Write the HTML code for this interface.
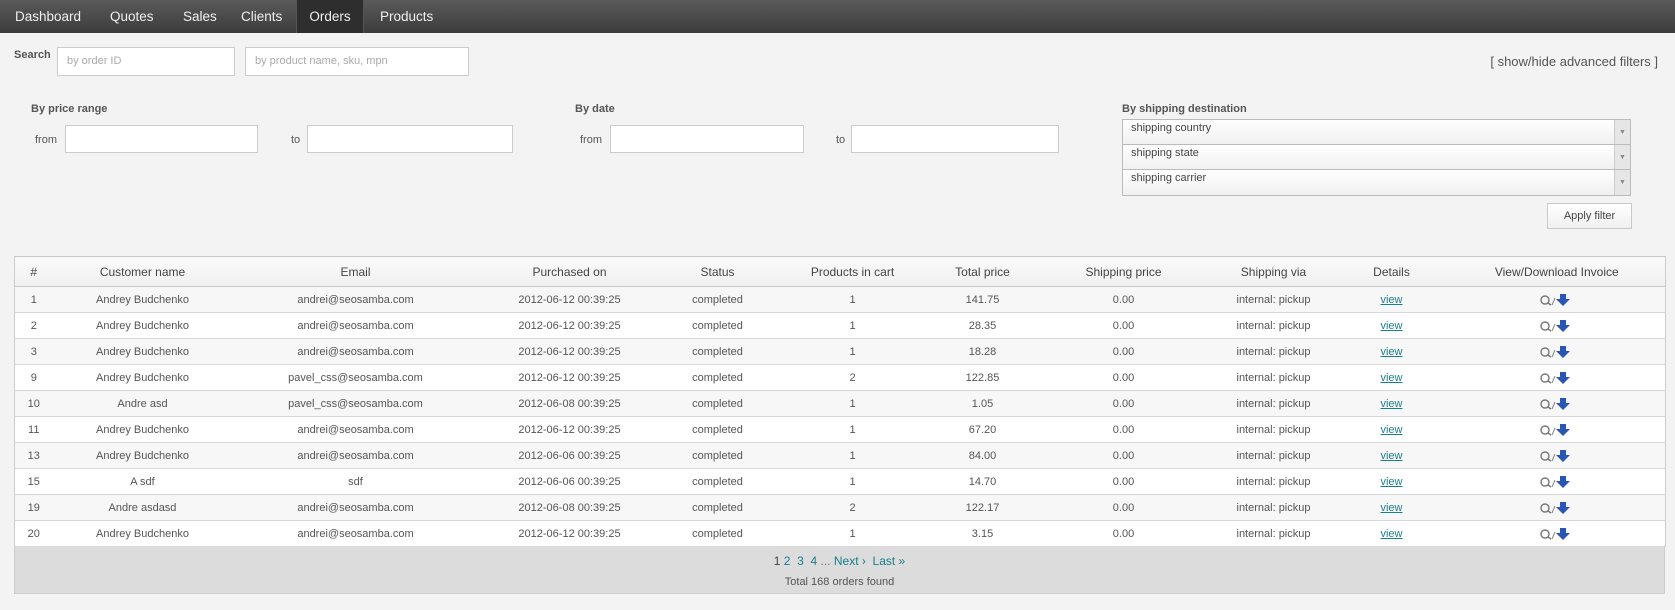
<!DOCTYPE html>
<html><head><meta charset="utf-8"><style>
*{box-sizing:border-box;margin:0;padding:0}
body{width:1675px;height:610px;background:#f3f3f3;font-family:"Liberation Sans",sans-serif;color:#444;position:relative;overflow:hidden}
.nav{position:absolute;left:0;top:0;width:1675px;height:33px;background:linear-gradient(#5a5a5a,#3c3c3c);}
.nav span{position:absolute;top:0;height:33px;line-height:33px;color:#f0f0f0;font-size:13.5px}
.nav .act{background:#2e2e2e;border-left:1px solid #555;border-right:1px solid #555;width:68px;text-align:center}
.a{position:absolute}
.in{position:absolute;background:#fff;border:1px solid #ccc;font-size:11px;color:#aaa;padding-left:9px;line-height:26px}
.lbl{position:absolute;font-size:11px;color:#555}
.b{position:absolute;font-size:11px;font-weight:bold;color:#555}
.sel{position:absolute;left:1122px;width:509px;height:27px;background:linear-gradient(#fff,#f0f0f0);border:1px solid #bbb;font-size:11px;color:#444;padding:2px 8px}
.sel i{position:absolute;right:0;top:0;width:16px;height:25px;border-left:1px solid #ccc;background:#e6e6e6;font-style:normal;font-size:7px;color:#888;text-align:center;line-height:25px}
table{position:absolute;left:14px;top:256px;width:1651px;border-collapse:collapse;border:1px solid #ccc;table-layout:fixed}
th{height:30px;font-weight:normal;font-size:12px;color:#444;background:linear-gradient(#fafafa,#f0f0f0);border-bottom:1px solid #ccc}
td{height:26px;font-size:11px;color:#555;text-align:center;border-bottom:1px solid #d6d6d6}
tr.o td{background:#f7f7f7}tr.e td{background:#fff}
td a{color:#1a7f8a;text-decoration:underline}
td svg{vertical-align:middle}
.foot{position:absolute;left:14px;top:546px;width:1651px;height:48px;background:#dcdcdc;border:1px solid #ccc;border-top:none;text-align:center;font-size:11px}
.foot .p{position:absolute;top:8px;left:0;width:100%;font-size:12px;color:#1a7f8a}
.foot .t{position:absolute;top:30px;left:0;width:100%;color:#555}
</style></head><body>
<div class="nav">
<span style="left:15px">Dashboard</span><span style="left:110px">Quotes</span><span style="left:183px">Sales</span><span style="left:241px">Clients</span><span class="act" style="left:296px">Orders</span><span style="left:380px">Products</span>
</div>
<div class="b" style="left:14px;top:49px">Search</div>
<div class="in" style="left:57px;top:47px;width:178px;height:29px">by order ID</div>
<div class="in" style="left:245px;top:47px;width:224px;height:29px">by product name, sku, mpn</div>
<div class="a" style="left:1400px;top:54px;font-size:13px;color:#555;width:258px;text-align:right">[ show/hide advanced filters ]</div>
<div class="b" style="left:31px;top:103px">By price range</div>
<div class="lbl" style="left:35px;top:134px">from</div>
<div class="in" style="left:65px;top:125px;width:193px;height:28px"></div>
<div class="lbl" style="left:291px;top:134px">to</div>
<div class="in" style="left:307px;top:125px;width:206px;height:28px"></div>
<div class="b" style="left:575px;top:103px">By date</div>
<div class="lbl" style="left:580px;top:134px">from</div>
<div class="in" style="left:610px;top:125px;width:194px;height:28px"></div>
<div class="lbl" style="left:836px;top:134px">to</div>
<div class="in" style="left:851px;top:125px;width:208px;height:28px"></div>
<div class="b" style="left:1122px;top:103px">By shipping destination</div>
<div class="sel" style="top:119px">shipping country<i>▼</i></div>
<div class="sel" style="top:144px">shipping state<i>▼</i></div>
<div class="sel" style="top:169px">shipping carrier<i>▼</i></div>
<div class="a" style="left:1547px;top:203px;width:85px;height:26px;border:1px solid #c8c8c8;background:linear-gradient(#fff,#f0f0f0);font-size:11px;color:#444;text-align:center;line-height:24px">Apply filter</div>
<table>
<colgroup><col style="width:38px"><col style="width:180px"><col style="width:246px"><col style="width:182px"><col style="width:114px"><col style="width:156px"><col style="width:104px"><col style="width:178px"><col style="width:122px"><col style="width:114px"><col style="width:217px"></colgroup>
<tr><th>#</th><th>Customer name</th><th>Email</th><th>Purchased on</th><th>Status</th><th>Products in cart</th><th>Total price</th><th>Shipping price</th><th>Shipping via</th><th>Details</th><th>View/Download Invoice</th></tr>
<tr class="o"><td>1</td><td>Andrey Budchenko</td><td>andrei@seosamba.com</td><td>2012-06-12 00:39:25</td><td>completed</td><td>1</td><td>141.75</td><td>0.00</td><td>internal: pickup</td><td><a>view</a></td><td>ICO</td></tr>
<tr class="e"><td>2</td><td>Andrey Budchenko</td><td>andrei@seosamba.com</td><td>2012-06-12 00:39:25</td><td>completed</td><td>1</td><td>28.35</td><td>0.00</td><td>internal: pickup</td><td><a>view</a></td><td>ICO</td></tr>
<tr class="o"><td>3</td><td>Andrey Budchenko</td><td>andrei@seosamba.com</td><td>2012-06-12 00:39:25</td><td>completed</td><td>1</td><td>18.28</td><td>0.00</td><td>internal: pickup</td><td><a>view</a></td><td>ICO</td></tr>
<tr class="e"><td>9</td><td>Andrey Budchenko</td><td>pavel_css@seosamba.com</td><td>2012-06-12 00:39:25</td><td>completed</td><td>2</td><td>122.85</td><td>0.00</td><td>internal: pickup</td><td><a>view</a></td><td>ICO</td></tr>
<tr class="o"><td>10</td><td>Andre asd</td><td>pavel_css@seosamba.com</td><td>2012-06-08 00:39:25</td><td>completed</td><td>1</td><td>1.05</td><td>0.00</td><td>internal: pickup</td><td><a>view</a></td><td>ICO</td></tr>
<tr class="e"><td>11</td><td>Andrey Budchenko</td><td>andrei@seosamba.com</td><td>2012-06-12 00:39:25</td><td>completed</td><td>1</td><td>67.20</td><td>0.00</td><td>internal: pickup</td><td><a>view</a></td><td>ICO</td></tr>
<tr class="o"><td>13</td><td>Andrey Budchenko</td><td>andrei@seosamba.com</td><td>2012-06-06 00:39:25</td><td>completed</td><td>1</td><td>84.00</td><td>0.00</td><td>internal: pickup</td><td><a>view</a></td><td>ICO</td></tr>
<tr class="e"><td>15</td><td>A sdf</td><td>sdf</td><td>2012-06-06 00:39:25</td><td>completed</td><td>1</td><td>14.70</td><td>0.00</td><td>internal: pickup</td><td><a>view</a></td><td>ICO</td></tr>
<tr class="o"><td>19</td><td>Andre asdasd</td><td>andrei@seosamba.com</td><td>2012-06-08 00:39:25</td><td>completed</td><td>2</td><td>122.17</td><td>0.00</td><td>internal: pickup</td><td><a>view</a></td><td>ICO</td></tr>
<tr class="e"><td>20</td><td>Andrey Budchenko</td><td>andrei@seosamba.com</td><td>2012-06-12 00:39:25</td><td>completed</td><td>1</td><td>3.15</td><td>0.00</td><td>internal: pickup</td><td><a>view</a></td><td>ICO</td></tr>
</table>
<div class="foot"><div class="p"><span style="color:#444">1</span> 2&nbsp; 3&nbsp; 4 <span style="color:#777">...</span> Next ›&nbsp; Last »</div><div class="t">Total 168 orders found</div></div>
<script>
var ico='<svg width="36" height="16" viewBox="0 0 36 16"><circle cx="6" cy="8" r="4" fill="none" stroke="#777" stroke-width="1.4"/><path d="M9 11 L12 13" stroke="#777" stroke-width="1.6"/><path d="M13 13 L16 6" stroke="#888" stroke-width="1"/><path d="M21 2 h6 v5 h4 l-7 7 l-7 -7 h4 z" fill="#2a55b0"/></svg>';
document.querySelectorAll('td').forEach(function(t){if(t.textContent==='ICO')t.innerHTML=ico;});
</script>
</body></html>
